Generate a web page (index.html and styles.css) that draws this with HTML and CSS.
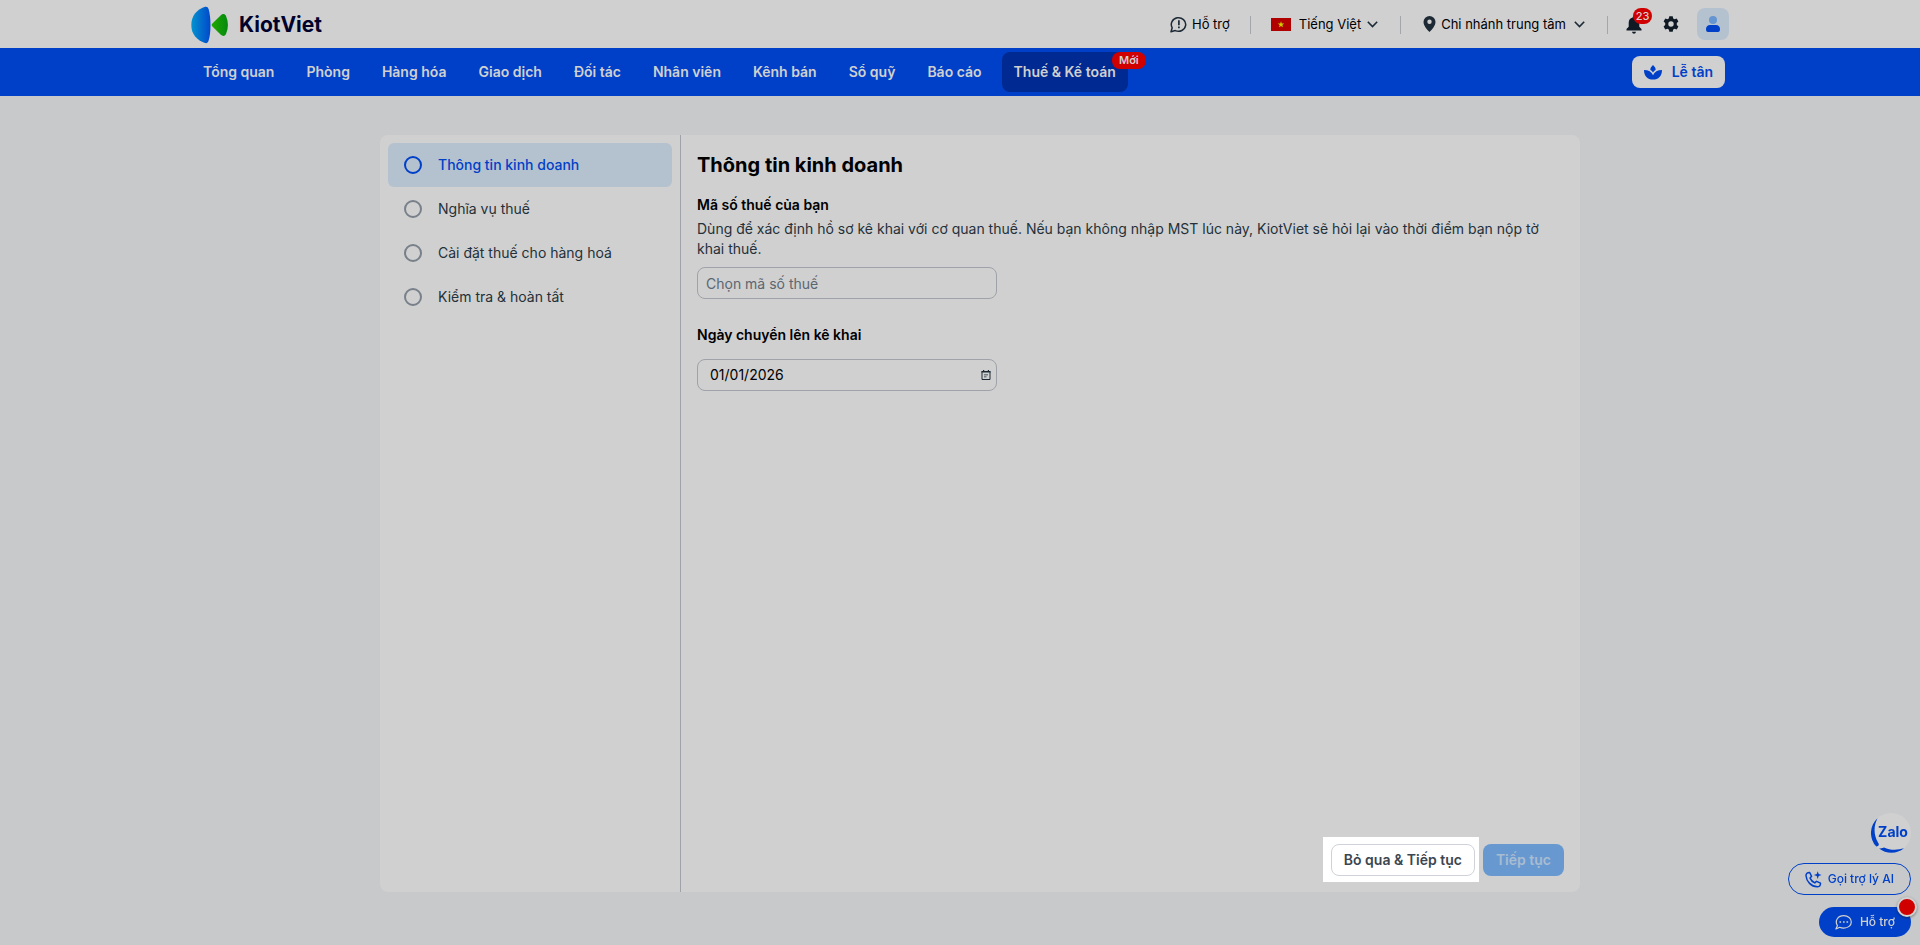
FILE: index.html
```html
<!DOCTYPE html>
<html lang="vi">
<head>
<meta charset="utf-8">
<meta name="viewport" content="width=device-width, initial-scale=1">
<title>KiotViet - Thuế &amp; Kế toán</title>
<link rel="stylesheet" href="styles.css">
</head>
<body>
<header class="topbar">
  <div class="container topbar-inner">
    <a class="logo" href="#">
      <svg width="38" height="38" viewBox="0 0 38 38" aria-hidden="true">
        <defs>
          <linearGradient id="lgBlue" x1="0" y1="0" x2="1" y2="0"><stop offset="0" stop-color="#0493ce"/><stop offset="1" stop-color="#0148cc"/></linearGradient>
          <linearGradient id="lgGreen" x1="0" y1="0" x2="1" y2="0"><stop offset="0" stop-color="#1fa800"/><stop offset="1" stop-color="#04890f"/></linearGradient>
        </defs>
        <path d="M14 .8C15.800 .400 16.800 1 17.600 3.200C20.100 11 20.100 27 17.600 34.600C16.800 36.900 15.800 37.500 14 37C5.500 34 .3 28 .3 19S5.500 3.800 14 .8Z" fill="url(#lgBlue)"/>
        <path d="M21.400 17.600L29.800 9.200C31.600 7.500 33.900 7.700 35 10C37.600 15.800 37.600 22 35 28C33.900 30.300 31.600 30.500 29.800 28.800L21.400 20.400C20.300 19.300 20.300 18.700 21.400 17.600Z" fill="url(#lgGreen)"/>
      </svg>
      <span class="logo-text">KiotViet</span>
    </a>
    <div class="tools">
      <button class="tool" type="button">
        <svg width="17" height="17" viewBox="0 0 17 17" fill="none" stroke="#1d2a36" stroke-width="1.500" aria-hidden="true"><path d="M1 15.700L2.200 11.800A7.200 6.800 0 1 1 5.300 14.600Z" stroke-linejoin="round"/><path d="M8.900 4.300V9.200M8.900 10.500V12.200" stroke-width="1.700"/></svg>
        <span>Hỗ trợ</span>
      </button>
      <span class="sep"></span>
      <button class="tool tool-lang" type="button">
        <svg class="flag" width="20" height="13" viewBox="0 0 20 13" aria-hidden="true"><rect width="20" height="13" fill="#b00000"/><path d="M10 3.200L10.800 5.500H13.200L11.300 6.900L12 9.300L10 7.900L8 9.300L8.700 6.900L6.800 5.500H9.200Z" fill="#cfcf00"/></svg>
        <span>Tiếng Việt</span>
        <svg class="chev" width="11" height="7" viewBox="0 0 11 7" fill="none" stroke="#1d2a36" stroke-width="1.600" aria-hidden="true"><path d="M.8 .8L5.500 5.500L10.200 .8"/></svg>
      </button>
      <span class="sep sep-wide"></span>
      <button class="tool" type="button">
        <svg width="13" height="16" viewBox="0 0 13 16" aria-hidden="true"><path fill="#1d2a36" fill-rule="evenodd" d="M6.500 0A6 6 0 0 1 12.500 6C12.500 9.500 9 13.500 6.500 16C4 13.500 .5 9.500 .5 6A6 6 0 0 1 6.500 0ZM6.500 3.600A2.200 2.200 0 1 0 6.500 8A2.200 2.200 0 1 0 6.500 3.600Z"/></svg>
        <span>Chi nhánh trung tâm</span>
        <svg class="chev" width="11" height="7" viewBox="0 0 11 7" fill="none" stroke="#1d2a36" stroke-width="1.600" aria-hidden="true"><path d="M.8 .8L5.500 5.500L10.200 .8"/></svg>
      </button>
      <span class="sep sep-last"></span>
      <button class="tool bell" type="button" aria-label="Thông báo">
        <svg width="16" height="18" viewBox="0 0 16 18" aria-hidden="true"><path fill="#0f1a24" d="M8 .3C8.800 .3 9.300 .8 9.300 1.600C12 2.200 13.300 4.200 13.300 6.800V10.700L15.500 13V14.600H.5V13L2.700 10.700V6.800C2.700 4.200 4 2.200 6.700 1.600C6.700 .8 7.200 .3 8 .3ZM6 15.700H10C9.800 17 9 17.700 8 17.700S6.200 17 6 15.700Z"/></svg>
        <span class="count">23</span>
      </button>
      <button class="tool gear" type="button" aria-label="Thiết lập">
        <svg width="16" height="16" viewBox="0 0 16 16" aria-hidden="true"><path fill="#0f1a24" fill-rule="evenodd" d="M6.300 .2H9.700L10.200 2.400L11.600 3.200L13.700 2.500L15.400 5.500L13.800 7V9L15.400 10.500L13.700 13.500L11.600 12.800L10.200 13.600L9.700 15.800H6.300L5.800 13.600L4.400 12.800L2.300 13.500L.6 10.500L2.200 9V7L.6 5.500L2.300 2.500L4.400 3.200L5.800 2.400ZM8 5.300A2.700 2.700 0 1 0 8 10.700A2.700 2.700 0 1 0 8 5.300Z"/></svg>
      </button>
      <button class="avatar" type="button" aria-label="Tài khoản">
        <svg width="16" height="16" viewBox="0 0 16 16" aria-hidden="true"><circle cx="8" cy="4" r="4" fill="#6495d0"/><path d="M5 9H11C13.500 9 15 10.800 15 13C15 15 14.500 16 13 16H3C1.500 16 1 15 1 13C1 10.800 2.500 9 5 9Z" fill="#0040c8"/></svg>
      </button>
    </div>
  </div>
</header>
<nav class="mainnav">
  <div class="container mainnav-inner">
    <ul class="menu">
      <li><a href="#">Tổng quan</a></li>
      <li><a href="#">Phòng</a></li>
      <li><a href="#">Hàng hóa</a></li>
      <li><a href="#">Giao dịch</a></li>
      <li><a href="#">Đối tác</a></li>
      <li><a href="#">Nhân viên</a></li>
      <li><a href="#">Kênh bán</a></li>
      <li><a href="#">Sổ quỹ</a></li>
      <li><a href="#">Báo cáo</a></li>
      <li><a class="active" href="#">Thuế &amp; Kế toán</a><span class="new">Mới</span></li>
    </ul>
    <button class="reception" type="button">
      <svg width="18" height="15" viewBox="0 0 18 15" aria-hidden="true"><path fill="#0040c8" d="M9 0C10.600 1.600 11.700 3.100 11.700 4.800C10.600 5.500 9.600 6.500 9 7.600C8.400 6.500 7.400 5.500 6.300 4.800C6.300 3.100 7.400 1.600 9 0ZM0 5C4.500 5 7.500 6.800 9 10.200C10.500 6.800 13.500 5 18 5C18 11 14.500 14.600 9 14.600S0 11 0 5Z"/></svg>
      <span>Lễ tân</span>
    </button>
  </div>
</nav>
<main class="page">
  <div class="card">
    <aside class="steps">
      <a class="step current" href="#"><span class="ring"></span>Thông tin kinh doanh</a>
      <a class="step" href="#"><span class="ring"></span>Nghĩa vụ thuế</a>
      <a class="step" href="#"><span class="ring"></span>Cài đặt thuế cho hàng hoá</a>
      <a class="step" href="#"><span class="ring"></span>Kiểm tra &amp; hoàn tất</a>
    </aside>
    <form class="content">
      <h1>Thông tin kinh doanh</h1>
      <div class="group">
        <label for="tax">Mã số thuế của bạn</label>
        <p>Dùng để xác định hồ sơ kê khai với cơ quan thuế. Nếu bạn không nhập MST lúc này, KiotViet sẽ hỏi lại vào thời điểm bạn nộp tờ khai thuế.</p>
        <input class="field" id="tax" type="text" placeholder="Chọn mã số thuế">
      </div>
      <div class="group group-date">
        <label for="date">Ngày chuyển lên kê khai</label>
        <div class="field datefield">
          <input id="date" type="text" value="01/01/2026">
          <button type="button" aria-label="Chọn ngày">
            <svg width="10" height="10" viewBox="0 0 10 10" aria-hidden="true"><path d="M1 1.500H9V9.500H1Z" fill="none" stroke="#1d2a36" stroke-width="1"/><path d="M.5 1H9.500V2.600H.5ZM2 0H3.200V1H2ZM6.800 0H8V1H6.800ZM3 4.500H7V5.300H3ZM3 6.400H5.500V7.200H3Z" fill="#1d2a36"/></svg>
          </button>
        </div>
      </div>
      <footer class="actions">
        <div class="spotlight"><button class="btn skip" type="button">Bỏ qua &amp; Tiếp tục</button></div>
        <button class="btn next" type="button">Tiếp tục</button>
      </footer>
    </form>
  </div>
</main>
<div class="floating">
  <button class="zalo" type="button">
    <svg width="40" height="40" viewBox="0 0 40 40" aria-hidden="true"><circle cx="20" cy="20" r="20" fill="#d0d0d0"/><path d="M6.500 5.200A20 20 0 0 0 5.300 33.600C8 33 8.500 31.500 7 29.500C2.500 22 2.500 13 6.500 5.200ZM8 35.500A20 20 0 0 0 33 35.300C26 37.500 19 37.300 13 34.500C11 35.200 9.500 35.500 8 35.500Z" fill="#0040c8"/></svg>
    <span>Zalo</span>
  </button>
  <button class="pill outline" type="button">
    <svg width="17" height="17" viewBox="0 0 17 17" fill="none" stroke="#0040c8" stroke-width="1.500" stroke-linejoin="round" aria-hidden="true"><path d="M4.700 1.500L6.600 5.300L5.100 7.100C6 9.300 7.500 10.900 9.800 11.900L11.600 10.300L15.500 12.200C15.600 14.600 14.200 15.800 12.300 15.800C6.200 15.500 1.500 10.600 1 4.700C1 2.700 2.300 1.400 4.700 1.500Z"/><path d="M12.700 .2L13.700 3.100L16.600 4.100L13.700 5.100L12.700 8L11.700 5.100L8.800 4.100L11.700 3.100Z" fill="#0040c8" stroke="none"/></svg>
    <span>Gọi trợ lý AI</span>
  </button>
  <button class="pill solid" type="button">
    <svg width="17" height="15" viewBox="0 0 17 15" fill="none" stroke="#d0d0d0" stroke-width="1.200" stroke-linejoin="round" aria-hidden="true"><path d="M.9 14L2.500 10.600C-.8 5.500 3.200 .7 8.800 .7C13 .7 16.300 3.400 16.300 7S13 13.100 8.800 13.100C7.200 13.100 5.700 12.800 4.700 12.300Z"/><path d="M4.500 7H6.100M8 7H9.600M11.500 7H13.100" stroke-width="1.600"/></svg>
    <span>Hỗ trợ</span>
    <i class="dot"></i>
  </button>
</div>
</body>
</html>
```
FILE: styles.css
```css
* { box-sizing: border-box; }
body {
  margin: 0;
  min-height: 100vh;
  background: #c8c9cb;
  color: #000;
  font: 14px/20px Inter, "Noto Sans", sans-serif;
}
button, input { font: inherit; color: inherit; }
button { border: 0; padding: 0; background: none; cursor: pointer; }
a { color: inherit; text-decoration: none; }
svg { display: block; flex: none; }

.container { max-width: 1538px; margin: 0 auto; }

.topbar { background: #d0d0d0; }
.topbar-inner { height: 48px; display: flex; align-items: center; justify-content: space-between; }
.logo { display: flex; align-items: center; gap: 10px; padding-top: 2px; }
.logo-text { font-size: 21px; line-height: 24px; font-weight: 700; color: #00022c; }
.tools { display: flex; align-items: center; font-size: 13px; }
.tool { display: flex; align-items: center; gap: 5px; }
.tool-lang { gap: 6px; }
.flag { margin-right: 2px; }
.chev { margin-left: 3px; }
.sep { width: 1px; height: 18px; margin: 2px 20px 0; background: #a3a6ab; }
.sep-wide { margin: 2px 22px 0; }
.sep-last { margin: 2px 18px 0 22px; }
.bell { position: relative; margin-top: 1px; }
.count {
  position: absolute; left: 7px; top: -8px;
  min-width: 19px; height: 16px; border-radius: 8px;
  background: #d00000; color: #d8d0d0;
  font-size: 11px; line-height: 16px; font-weight: 500; text-align: center;
}
.gear { margin-left: 21px; }
.avatar {
  display: grid; place-items: center;
  width: 32px; height: 32px; margin-left: 18px;
  border-radius: 8px; background: #b4c2d0;
}
.tool-lang .chev { margin-left: 0; }

.mainnav { background: #0040c8; color: #d0d0d0; font-weight: 600; }
.mainnav-inner { height: 48px; display: flex; align-items: center; justify-content: space-between; }
.menu { display: flex; gap: 8px; margin: 0; padding: 0; list-style: none; }
.menu li { position: relative; }
.menu a { display: block; padding: 10px 12px; border-radius: 8px; white-space: nowrap; }
.menu .active { background: #002a92; }
.new {
  position: absolute; right: -18px; top: 0;
  padding: 0 7px; border-radius: 8px;
  background: #d00000; font-size: 11px; line-height: 17px;
}
.reception {
  display: flex; align-items: center; gap: 10px;
  height: 32px; margin-right: 4px; padding: 0 12px;
  border-radius: 8px; background: #d0d0d0; color: #0040c8;
}

.page { padding: 39px 16px 52px 56px; }
.card {
  display: flex;
  max-width: 1200px; min-height: calc(100vh - 188px); margin: 0 auto;
  border-radius: 8px; background: #d0d0d0;
}
.steps { flex: 0 0 301px; padding: 8px; border-right: 1px solid #9fa2a8; }
.step {
  display: flex; align-items: center; gap: 16px;
  height: 44px; padding: 0 16px;
  border-radius: 6px; color: #24303a;
}
.ring { width: 18px; height: 18px; border: 2px solid #78808a; border-radius: 50%; }
.current { background: #b4c2d0; color: #0040c8; font-weight: 500; }
.current .ring { border-color: #0040c8; }

.content { flex: 1; display: flex; flex-direction: column; padding: 16px; }
h1 { margin: 0; font-size: 20px; line-height: 28px; font-weight: 700; }
.group { display: flex; flex-direction: column; margin-top: 16px; }
.group label { font-weight: 600; }
.group p { margin: 4px 0 8px; color: #24303a; }
.group-date { gap: 14px; margin-top: 26px; }
.field {
  width: 300px; height: 32px; padding: 0 8px;
  border: 1px solid #9fa2a8; border-radius: 8px; background: transparent;
}
.field::placeholder { color: #5c6670; opacity: 1; }
.datefield { display: flex; align-items: center; padding: 0 5px 0 12px; }
.datefield input { flex: 1; min-width: 0; padding: 0; border: 0; background: none; }
.actions { display: flex; align-items: center; justify-content: flex-end; gap: 4px; margin: auto 0 -6px; }
.spotlight { padding: 7px 4px 6px 8px; background: #fff; }
.btn { display: block; height: 32px; padding: 0 12px; border-radius: 8px; font-weight: 600; }
.skip { border: 1px solid #cfd2d8; background: #fff; color: #3c4650; }
.next { padding: 0 13px; background: #6898d0; color: #a8bcd2; }

.floating {
  position: fixed; right: 9px; bottom: 8px;
  display: flex; flex-direction: column; align-items: flex-end;
  color: #0040c8; font-size: 12px; font-weight: 500;
}
.zalo { display: grid; place-items: center; margin-bottom: 10px; }
.zalo > * { grid-area: 1 / 1; }
.zalo span { padding: 0 0 2px 4px; font-size: 14px; font-weight: 700; }
.pill { position: relative; display: flex; align-items: center; border-radius: 16px; }
.outline { height: 32px; gap: 6px; padding: 0 16px; border: 1px solid #0040c8; }
.solid { height: 30px; gap: 8px; margin-top: 12px; padding: 0 16px; background: #0040c8; color: #d0d0d0; }
.dot {
  position: absolute; right: -6px; top: -10px;
  width: 20px; height: 20px; border: 2px solid #d0d0d0; border-radius: 50%;
  background: #d00000; box-shadow: 0 1px 3px #0006;
}
```
